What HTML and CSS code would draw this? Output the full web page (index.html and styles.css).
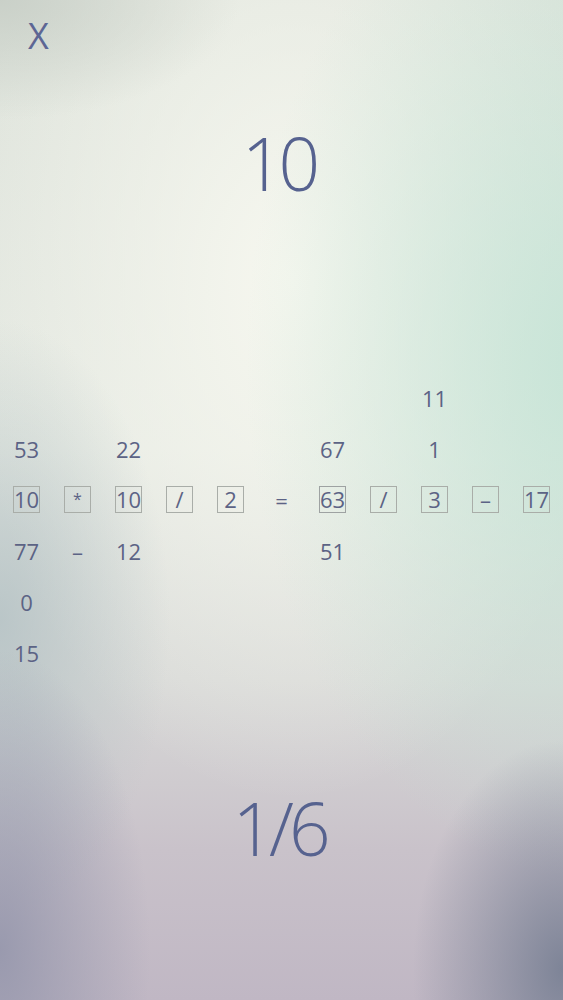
FILE: index.html
```html
<!DOCTYPE html>
<html>
<head>
<meta charset="utf-8">
<link rel="stylesheet" href="styles.css">
</head>
<body>
<div class="screen">
  <div class="header"><span class="close">X</span></div>
  <div class="target">10</div>
  <div class="board">
    <div class="cell"></div><div class="cell"></div><div class="cell"></div><div class="cell"></div><div class="cell"></div><div class="cell"></div><div class="cell"></div><div class="cell"></div><div class="cell">11</div><div class="cell"></div><div class="cell"></div>

    <div class="cell">53</div><div class="cell"></div><div class="cell">22</div><div class="cell"></div><div class="cell"></div><div class="cell"></div><div class="cell">67</div><div class="cell"></div><div class="cell">1</div><div class="cell"></div><div class="cell"></div>

    <div class="cell"><span class="box">10</span></div><div class="cell"><span class="box op">*</span></div><div class="cell"><span class="box">10</span></div><div class="cell"><span class="box">/</span></div><div class="cell"><span class="box">2</span></div><div class="cell">=</div><div class="cell"><span class="box dark">63</span></div><div class="cell"><span class="box">/</span></div><div class="cell"><span class="box">3</span></div><div class="cell"><span class="box">–</span></div><div class="cell"><span class="box">17</span></div>

    <div class="cell">77</div><div class="cell">–</div><div class="cell">12</div><div class="cell"></div><div class="cell"></div><div class="cell"></div><div class="cell">51</div><div class="cell"></div><div class="cell"></div><div class="cell"></div><div class="cell"></div>

    <div class="cell">0</div><div class="cell"></div><div class="cell"></div><div class="cell"></div><div class="cell"></div><div class="cell"></div><div class="cell"></div><div class="cell"></div><div class="cell"></div><div class="cell"></div><div class="cell"></div>

    <div class="cell">15</div><div class="cell"></div><div class="cell"></div><div class="cell"></div><div class="cell"></div><div class="cell"></div><div class="cell"></div><div class="cell"></div><div class="cell"></div><div class="cell"></div><div class="cell"></div>
  </div>
  <div class="progress">1/6</div>
</div>
</body>
</html>
```
FILE: styles.css
```css
html, body {
  margin: 0;
  padding: 0;
}
body {
  font-family: "Open Sans", "DejaVu Sans", sans-serif;
  color: #5a6490;
}
.screen {
  width: 563px;
  height: 1000px;
  overflow: hidden;
  display: flex;
  flex-direction: column;
  background:
    radial-gradient(ellipse 150px 230px at 100% 97%, rgba(118,126,146,0.9), rgba(118,126,146,0) 100%),
    radial-gradient(ellipse 150px 300px at 0% 95%, rgba(146,148,170,0.85), rgba(146,148,170,0) 100%),
    radial-gradient(ellipse 170px 300px at 0% 62%, rgba(172,188,192,0.7), rgba(172,188,192,0) 100%),
    radial-gradient(ellipse 340px 520px at 104% 36%, rgba(196,228,214,0.9), rgba(196,228,214,0) 100%),
    radial-gradient(ellipse 240px 120px at 0% 0%, rgba(198,205,197,0.85), rgba(198,205,197,0) 100%),
    radial-gradient(ellipse 330px 520px at 52% 28%, rgba(246,247,239,1), rgba(246,247,239,0) 100%),
    linear-gradient(to bottom, #dfe4dc 0%, #e5e9e2 45%, #d8d9d7 68%, #c9c2ca 85%, #c0b7c4 100%);
}
.header {
  padding: 18px 0 0 28px;
  height: 35px;
}
.close {
  font-size: 36px;
  line-height: 35px;
  font-weight: 400;
  color: #5d6694;
}
.target {
  margin-top: 74px;
  padding-right: 6px;
  text-align: center;
  font-size: 73px;
  line-height: 72px;
  letter-spacing: -5px;
  font-weight: 360;
  color: #56628f;
}
.board {
  margin-top: 173px;
  display: grid;
  grid-template-columns: repeat(11, 51px);
  grid-auto-rows: 51px;
  justify-content: center;
}
.cell {
  display: flex;
  align-items: center;
  justify-content: center;
  font-size: 22px;
  color: #5c6385;
}
.box {
  width: 25px;
  height: 25px;
  border: 1px solid #a9ada8;
  display: flex;
  align-items: center;
  justify-content: center;
  line-height: 25px;
}
.box.dark {
  border-color: #9ea2a2;
}
.op {
  font-size: 16px;
}
.progress {
  margin-top: 114px;
  padding-right: 5px;
  text-align: center;
  font-size: 73px;
  line-height: 72px;
  letter-spacing: -5px;
  font-weight: 360;
  color: #56628f;
}
```
